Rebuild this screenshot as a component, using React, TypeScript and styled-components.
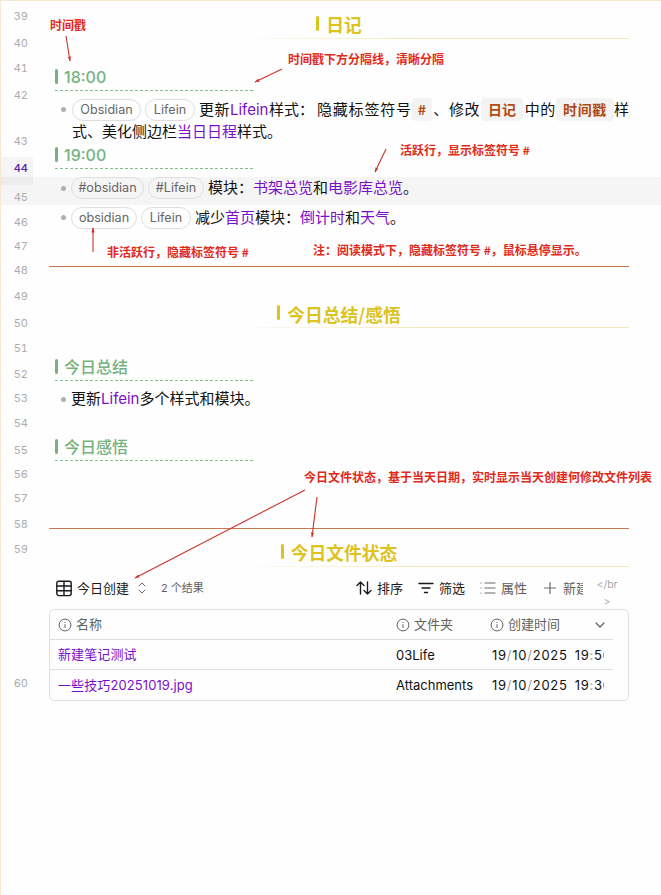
import React from "react";
import styled, { createGlobalStyle, css } from "styled-components";

const GlobalStyle = createGlobalStyle`
  * { box-sizing: border-box; }
  body { margin: 0; background: #fefefe; }
`;

const sans = `Inter, "Noto Sans CJK SC", sans-serif`;
const cjk = `"Noto Sans CJK SC", Inter, sans-serif`;

const Page = styled.main`
  position: relative;
  display: grid;
  grid-template-columns: 48px 580px;
  width: 661px;
  height: 895px;
  overflow: hidden;
  border-left: 1px solid #f3ead0;
  border-top: 1px solid #f3ead0;
  background: #fefefe;
  color: #111;
  font-family: ${sans};
  font-size: 15px;
`;

const Gutter = styled.div`
  padding-top: 5px;
  z-index: 1;
`;

const LineNo = styled.div<{ $h: number; $active?: boolean }>`
  width: 32px;
  height: ${(p) => p.$h}px;
  padding-right: 5px;
  text-align: right;
  font-size: 11px;
  font-variant-numeric: tabular-nums;
  line-height: 21px;
  color: #adadad;
  ${(p) =>
    p.$active &&
    css`
      height: 28px;
      margin-top: -1px;
      margin-bottom: 2px;
      padding-top: 1px;
      color: #5b21a8;
      font-weight: 500;
      background: rgba(0, 0, 0, 0.035);
    `}
`;

const Content = styled.div`
  display: flex;
  flex-direction: column;
  margin-top: -1px;
  min-width: 0;
`;

const Title = styled.h1<{ $top: number; $drop?: number }>`
  display: flex;
  align-items: center;
  justify-content: center;
  gap: 7px;
  flex: none;
  margin: ${(p) => p.$top}px 0 0;
  height: 27px;
  padding-bottom: ${(p) => 3 - 2 * (p.$drop ?? 0)}px;
  font: 700 17.8px/24px ${cjk};
  color: #dcc31e;
  background: linear-gradient(90deg, rgba(240, 232, 185, 0) 30%, #f0e9bd 65%) bottom / 100% 1px no-repeat;
  &::before {
    content: "";
    width: 3px;
    height: 15px;
    border-radius: 1.5px;
    background: #dcc31e;
    margin-bottom: ${(p) => 1 + 2 * (p.$drop ?? 0)}px;
  }
`;

const Stamp = styled.h2<{ $top: number }>`
  display: flex;
  align-items: flex-start;
  gap: 6px;
  flex: none;
  width: 199px;
  height: 26px;
  margin: ${(p) => p.$top}px 0 0 6px;
  font: 500 16px/24px ${sans};
  color: #75b280;
  background: repeating-linear-gradient(90deg, #86bb90 0 3px, transparent 3px 5px) bottom / 100% 1px no-repeat;
  &::before {
    content: "";
    width: 3px;
    height: 15px;
    margin-top: 4px;
    border-radius: 1.5px;
    background: #75b280;
  }
`;

const Row = styled.div<{ $top?: number; $h: number; $active?: boolean; $indent?: number }>`
  display: flex;
  align-items: center;
  flex: none;
  height: ${(p) => p.$h}px;
  margin-top: ${(p) => p.$top ?? 0}px;
  padding-left: ${(p) => p.$indent ?? 22}px;
  white-space: nowrap;
  ${(p) =>
    p.$active &&
    css`
      margin-left: -49px;
      margin-right: -32px;
      padding-left: 71px;
      padding-bottom: 6px;
      background: #f5f5f5;
    `}
`;

const Bullet = styled.i<{ $gap?: number }>`
  flex: none;
  width: 5px;
  height: 5px;
  margin: 0 ${(p) => p.$gap ?? 5}px 0 ${(p) => -5 - (p.$gap ?? 5)}px;
  border-radius: 50%;
  background: #b0b0b0;
`;

const Tag = styled.span<{ $w: number }>`
  flex: none;
  width: ${(p) => p.$w}px;
  height: 22px;
  margin-right: 4px;
  border: 1px solid #dedede;
  border-radius: 11px;
  text-align: center;
  font-size: 12.6px;
  line-height: 20px;
  color: #666;
`;

const Seg = styled.span<{ $w?: number; $ls?: number; $link?: boolean }>`
  flex: none;
  width: ${(p) => (p.$w ? `${p.$w}px` : "auto")};
  letter-spacing: ${(p) => p.$ls ?? 0}px;
  line-height: 22px;
  color: ${(p) => (p.$link ? "#7a0fc8" : "inherit")};
`;

const Code = styled.code<{ $w: number; $ls?: number }>`
  flex: none;
  width: ${(p) => p.$w}px;
  height: 23px;
  border-radius: 4px;
  background: #f3f3f3;
  text-align: center;
  font: 700 14px/22px ${cjk};
  letter-spacing: ${(p) => p.$ls ?? 0}px;
  color: #b04a12;
`;

const Rule = styled.hr<{ $top: number }>`
  flex: none;
  width: 100%;
  height: 1px;
  margin: ${(p) => p.$top}px 0 0;
  border: 0;
  background: #c8784e;
`;

const Toolbar = styled.div`
  display: flex;
  align-items: center;
  flex: none;
  height: 42px;
  padding-left: 7px;
  font-size: 13px;
  line-height: 20px;
  white-space: nowrap;
  svg { flex: none; display: block; }
`;

const Label = styled.span<{ $w: number; $muted?: boolean; $small?: boolean }>`
  flex: none;
  width: ${(p) => p.$w}px;
  margin-top: -1px;
  overflow: hidden;
  color: ${(p) => (p.$muted ? "#5f5f5f" : "#1a1a1a")};
  font-size: ${(p) => (p.$small ? 11 : 13)}px;
`;

const IconBox = styled.span<{ $w: number; $muted?: boolean }>`
  flex: none;
  width: ${(p) => p.$w}px;
  color: ${(p) => (p.$muted ? "#6a6a6a" : "#1a1a1a")};
`;

const BreakTag = styled.span`
  width: 24px;
  margin-left: 12px;
  font-size: 10.5px;
  line-height: 17px;
  text-align: center;
  white-space: normal;
  word-break: break-all;
  color: #a8a8a8;
  padding-top: 9px;
`;

const Table = styled.div`
  flex: none;
  height: 92px;
  padding-right: 15px;
  border: 1px solid #dfdfdf;
  border-radius: 5px;
  font-size: 13px;
`;

const TRow = styled.div<{ $head?: boolean }>`
  display: grid;
  grid-template-columns: 338px 94px 1fr;
  align-items: center;
  height: 30px;
  padding: 0 8px;
  border-bottom: 1px solid #e0e0e0;
  color: ${(p) => (p.$head ? "#626262" : "#111")};
  white-space: nowrap;
  &:last-child { border-bottom: 0; }
`;

const HeadCell = styled.div`
  display: flex;
  align-items: center;
  gap: 4px;
  svg:last-child:not(:first-child) { margin-left: auto; margin-right: -1px; }
`;

const HeadText = styled.span`
  margin-top: -2px;
`;

const FileLink = styled.a`
  margin-top: -2px;
  letter-spacing: 0.1px;
  color: #7a0fc8;
`;

const DateCell = styled.div`
  display: flex;
  gap: 7px;
  overflow: hidden;
  width: 114px;
  padding-left: 2px;
  letter-spacing: 0.75px;
  i { font-style: normal; color: #9b9b9b; }
`;

const Note = styled.span<{ $x: number; $y: number }>`
  position: absolute;
  left: ${(p) => p.$x - 1}px;
  top: ${(p) => p.$y - 10}px;
  font: 700 12px/18px ${cjk};
  color: #e02a1b;
  white-space: nowrap;
`;

const Arrows = styled.svg`
  position: absolute;
  left: -1px;
  top: -1px;
  pointer-events: none;
`;

const Info = () => (
  <svg width="14" height="14" viewBox="0 0 14 14" fill="none" stroke="currentColor" strokeWidth="1">
    <circle cx="7" cy="7" r="5.9" />
    <path d="M7 6.3V10M7 4v1" />
  </svg>
);

const gutter: [number, number][] = [
  [39, 27], [40, 25], [41, 27], [42, 46], [43, 27], [44, 29], [45, 25], [46, 24],
  [47, 24], [48, 26], [49, 27], [50, 25], [51, 26], [52, 24], [53, 25], [54, 27],
  [55, 24], [56, 24], [57, 26], [58, 25], [59, 134], [60, 24],
];

const notes: [number, number, string][] = [
  [50, 25, "时间戳"],
  [288, 59, "时间戳下方分隔线，清晰分隔"],
  [400, 150, "活跃行，显示标签符号 #"],
  [107, 252, "非活跃行，隐藏标签符号 #"],
  [313, 250, "注：阅读模式下，隐藏标签符号 #，鼠标悬停显示。"],
  [304, 477, "今日文件状态，基于当天日期，实时显示当天创建何修改文件列表"],
];

const arrows: [number, number, number, number][] = [
  [66, 36, 70, 61],
  [282, 69, 255, 82],
  [386, 149, 375, 172],
  [93, 252, 93, 228],
  [305, 490, 135, 578],
  [317, 497, 312, 537],
];

const Stamped = ({ day, month, year, time }: { day: string; month: string; year: string; time: [string, string] }) => (
  <DateCell>
    <span>{day}<i>/</i>{month}<i>/</i>{year}</span>
    <span>{time[0]}<i>:</i>{time[1]}</span>
  </DateCell>
);

export default function App() {
  return (
    <Page>
      <GlobalStyle />
      <Gutter>
        {gutter.map(([n, h]) => (
          <LineNo key={n} $h={h} $active={n === 44}>{n}</LineNo>
        ))}
      </Gutter>
      <Content>
        <Title $top={12}>日记</Title>
        <Stamp $top={26}>18:00</Stamp>
        <Row $top={7} $h={23} $indent={23}>
          <Bullet $gap={6} />
          <Tag $w={69}>Obsidian</Tag>
          <Tag $w={50}>Lifein</Tag>
          <Seg $w={31} $ls={0.5}>更新</Seg>
          <Seg $w={39} $link>Lifein</Seg>
          <Seg $w={48}>样式：</Seg>
          <Seg $w={95} $ls={0.8}>隐藏标签符号</Seg>
          <Code $w={20}>#</Code>
          <Seg $w={17}>&#8202;、</Seg>
          <Seg $w={32} $ls={0.5}>修改</Seg>
          <Code $w={42}>日记</Code>
          <Seg $w={33} $ls={0.5}>&#8202;中的</Seg>
          <Code $w={58} $ls={0.6}>时间戳</Code>
          <Seg>样</Seg>
        </Row>
        <Row $h={22} $indent={23}>
          <Seg>式、美化侧边栏</Seg>
          <Seg $link>当日日程</Seg>
          <Seg>样式。</Seg>
        </Row>
        <Stamp $top={0}>19:00</Stamp>
        <Row $top={8} $h={28} $active>
          <Bullet />
          <Tag $w={73}>#obsidian</Tag>
          <Tag $w={56}>#Lifein</Tag>
          <Seg $w={45}>模块：</Seg>
          <Seg $link>书架总览</Seg>
          <Seg>和</Seg>
          <Seg $link>电影库总览</Seg>
          <Seg>。</Seg>
        </Row>
        <Row $top={1} $h={23}>
          <Bullet />
          <Tag $w={66}>obsidian</Tag>
          <Tag $w={50}>Lifein</Tag>
          <Seg>减少</Seg>
          <Seg $link>首页</Seg>
          <Seg>模块：</Seg>
          <Seg $link>倒计时</Seg>
          <Seg>和</Seg>
          <Seg $link>天气</Seg>
          <Seg>。</Seg>
        </Row>
        <Rule $top={37} />
        <Title $top={34} $drop={1}>今日总结/感悟</Title>
        <Stamp $top={27}>今日总结</Stamp>
        <Row $top={7} $h={22}>
          <Bullet />
          <Seg>更新</Seg>
          <Seg $link>Lifein</Seg>
          <Seg>多个样式和模块。</Seg>
        </Row>
        <Stamp $top={25}>今日感悟</Stamp>
        <Rule $top={67} />
        <Title $top={11}>今日文件状态</Title>
        <Toolbar>
          <IconBox $w={21}>
            <svg width="17" height="17" viewBox="0 0 17 17" fill="none" stroke="currentColor" strokeWidth="1.4">
              <rect x="0.8" y="1.2" width="14.4" height="14.4" rx="2" />
              <path d="M0.8 6h14.4M0.8 10.8h14.4M8 1.2v14.4" />
            </svg>
          </IconBox>
          <Label $w={60}>今日创建</Label>
          <IconBox $w={24} $muted>
            <svg width="10" height="12" viewBox="0 0 10 12" fill="none" stroke="currentColor" strokeLinecap="round" strokeLinejoin="round">
              <path d="M2 4l3-3 3 3M2 8l3 3 3-3" />
            </svg>
          </IconBox>
          <Label $w={195} $muted $small>2 个结果</Label>
          <IconBox $w={21}>
            <svg width="16" height="16" viewBox="0 0 16 16" fill="none" stroke="currentColor" strokeWidth="1.4" strokeLinecap="round" strokeLinejoin="round">
              <path d="M4.5 14V2M1 5.5L4.5 2 8 5.5M11.5 2v12M8 10.5l3.5 3.5L15 10.5" />
            </svg>
          </IconBox>
          <Label $w={41}>排序</Label>
          <IconBox $w={21}>
            <svg width="16" height="16" viewBox="0 0 16 16" fill="none" stroke="currentColor" strokeWidth="1.4" strokeLinecap="round">
              <path d="M1 3.5h14M4 8h8M6.5 12.5h3" />
            </svg>
          </IconBox>
          <Label $w={41}>筛选</Label>
          <IconBox $w={21} $muted>
            <svg width="16" height="16" viewBox="0 0 16 16" fill="none" stroke="currentColor" strokeWidth="1.2" strokeLinecap="round">
              <path d="M5 3h10M5 8h10M5 13h10M1 3h.2M1 8h.2M1 13h.2" />
            </svg>
          </IconBox>
          <Label $w={42} $muted>属性</Label>
          <IconBox $w={20} $muted>
            <svg width="14" height="14" viewBox="0 0 14 14" fill="none" stroke="currentColor" strokeWidth="1.2" strokeLinecap="round">
              <path d="M7 1.5v11M1.5 7h11" />
            </svg>
          </IconBox>
          <Label $w={20} $muted>新建</Label>
          <BreakTag>&lt;/br&gt;</BreakTag>
        </Toolbar>
        <Table>
          <TRow $head>
            <HeadCell><Info /><HeadText>名称</HeadText></HeadCell>
            <HeadCell><Info /><HeadText>文件夹</HeadText></HeadCell>
            <HeadCell>
              <Info /><HeadText>创建时间</HeadText>
              <svg width="12" height="8" viewBox="0 0 12 8" fill="none" stroke="currentColor" strokeWidth="1.2" strokeLinecap="round" strokeLinejoin="round">
                <path d="M2 2l4 4 4-4" />
              </svg>
            </HeadCell>
          </TRow>
          <TRow>
            <FileLink>新建笔记测试</FileLink>
            <span>03Life</span>
            <Stamped day="19" month="10" year="2025" time={["19", "50"]} />
          </TRow>
          <TRow>
            <FileLink>一些技巧20251019.jpg</FileLink>
            <span>Attachments</span>
            <Stamped day="19" month="10" year="2025" time={["19", "30"]} />
          </TRow>
        </Table>
      </Content>
      {notes.map(([x, y, text]) => (
        <Note key={text} $x={x} $y={y}>{text}</Note>
      ))}
      <Arrows width="661" height="895" viewBox="0 0 661 895">
        <defs>
          <marker id="tip" markerUnits="userSpaceOnUse" markerWidth="6" markerHeight="5" refX="4.5" refY="2" orient="auto">
            <path d="M0 0.4L5 2L0 3.6Z" fill="#cf3328" />
          </marker>
        </defs>
        {arrows.map(([x1, y1, x2, y2]) => (
          <line key={`${x1}-${y1}`} x1={x1} y1={y1} x2={x2} y2={y2} stroke="#cf3328" strokeWidth="1.1" markerEnd="url(#tip)" />
        ))}
      </Arrows>
    </Page>
  );
}
